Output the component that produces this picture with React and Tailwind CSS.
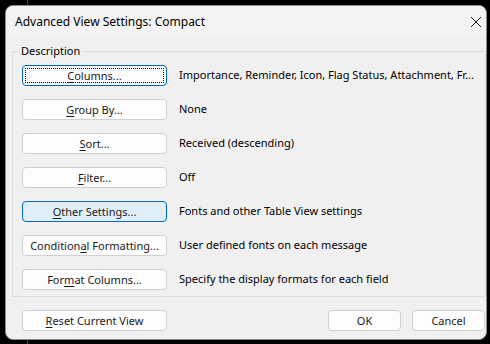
import React from "react";

function Btn({ children, className = "", variant = "normal" }) {
  const base =
    "h-[21px] shrink-0 flex items-center justify-center rounded-[4px] border text-[11px] leading-none text-[#1b1b1b]";
  if (variant === "focus") {
    return (
      <div className={`${base} border-[#0067c0] bg-[#fdfdfd] p-[2px] ${className}`}>
        <div className="w-full h-full flex items-center justify-center border border-dotted border-black">
          {children}
        </div>
      </div>
    );
  }
  if (variant === "hover") {
    return <div className={`${base} border-[#0067c0] bg-[#e0eef9] ${className}`}>{children}</div>;
  }
  return <div className={`${base} border-[#d0d0d0] bg-[#fdfdfd] ${className}`}>{children}</div>;
}

const U = ({ children }) => <span className="underline underline-offset-2">{children}</span>;

const rows = [
  { label: <><U>C</U>olumns...</>, desc: "Importance, Reminder, Icon, Flag Status, Attachment, Fr...", variant: "focus" },
  { label: <><U>G</U>roup By...</>, desc: "None" },
  { label: <><U>S</U>ort...</>, desc: "Received (descending)" },
  { label: <><U>F</U>ilter...</>, desc: "Off" },
  { label: <><U>O</U>ther Settings...</>, desc: "Fonts and other Table View settings", variant: "hover" },
  { label: <>Condition<U>a</U>l Formatting...</>, desc: "User defined fonts on each message" },
  { label: <>For<U>m</U>at Columns...</>, desc: "Specify the display formats for each field" },
];

export default function App() {
  return (
    <div className="relative w-[490px] h-[344px] bg-black pt-[5px] pl-[5px] font-['Noto_Sans',sans-serif] text-[11px] text-[#1b1b1b]">
      <div className="absolute left-[27px] top-0 w-px h-[5px] bg-[#4a4a4a]" />
      <div className="absolute left-[27px] bottom-0 w-px h-[4px] bg-[#4a4a4a]" />
      <div className="w-[482px] h-[335px] rounded-[8px] border border-[#8a8a8a] bg-[#f0f0f0] overflow-hidden flex flex-col">
        <div className="h-[31px] shrink-0 bg-[#f3f3f3] flex items-center justify-between pl-[9px] pr-[3px]">
          <span className="text-[12px] text-black">Advanced View Settings: Compact</span>
          <svg width="12" height="12" viewBox="0 0 12 12" className="mr-[1px]">
            <path d="M1 1 L11 11 M11 1 L1 11" stroke="#1b1b1b" strokeWidth="1" fill="none" />
          </svg>
        </div>
        <div className="flex flex-col pl-[6px] pr-[1px]">
          <div className="relative mt-[14px] h-[246px] w-[474px] border border-[#dcdcdc] pl-[9px] pt-[13px]">
            <span className="absolute left-[5px] top-[-9px] bg-[#f0f0f0] px-[3px] leading-[16px] text-black">Description</span>
            <div className="flex flex-col gap-[13px]">
              {rows.map((r, i) => (
                <div key={i} className="flex items-center gap-[12px]">
                  <Btn variant={r.variant} className="w-[145px]">{r.label}</Btn>
                  <span className="text-black whitespace-nowrap">{r.desc}</span>
                </div>
              ))}
            </div>
          </div>
          <div className="mt-[13px] flex items-center pl-[10px]">
            <Btn className="w-[145px]"><U>R</U>eset Current View</Btn>
            <div className="ml-auto flex gap-[11px]">
              <Btn className="w-[73px]">OK</Btn>
              <Btn className="w-[73px]">Cancel</Btn>
            </div>
          </div>
        </div>
      </div>
    </div>
  );
}
